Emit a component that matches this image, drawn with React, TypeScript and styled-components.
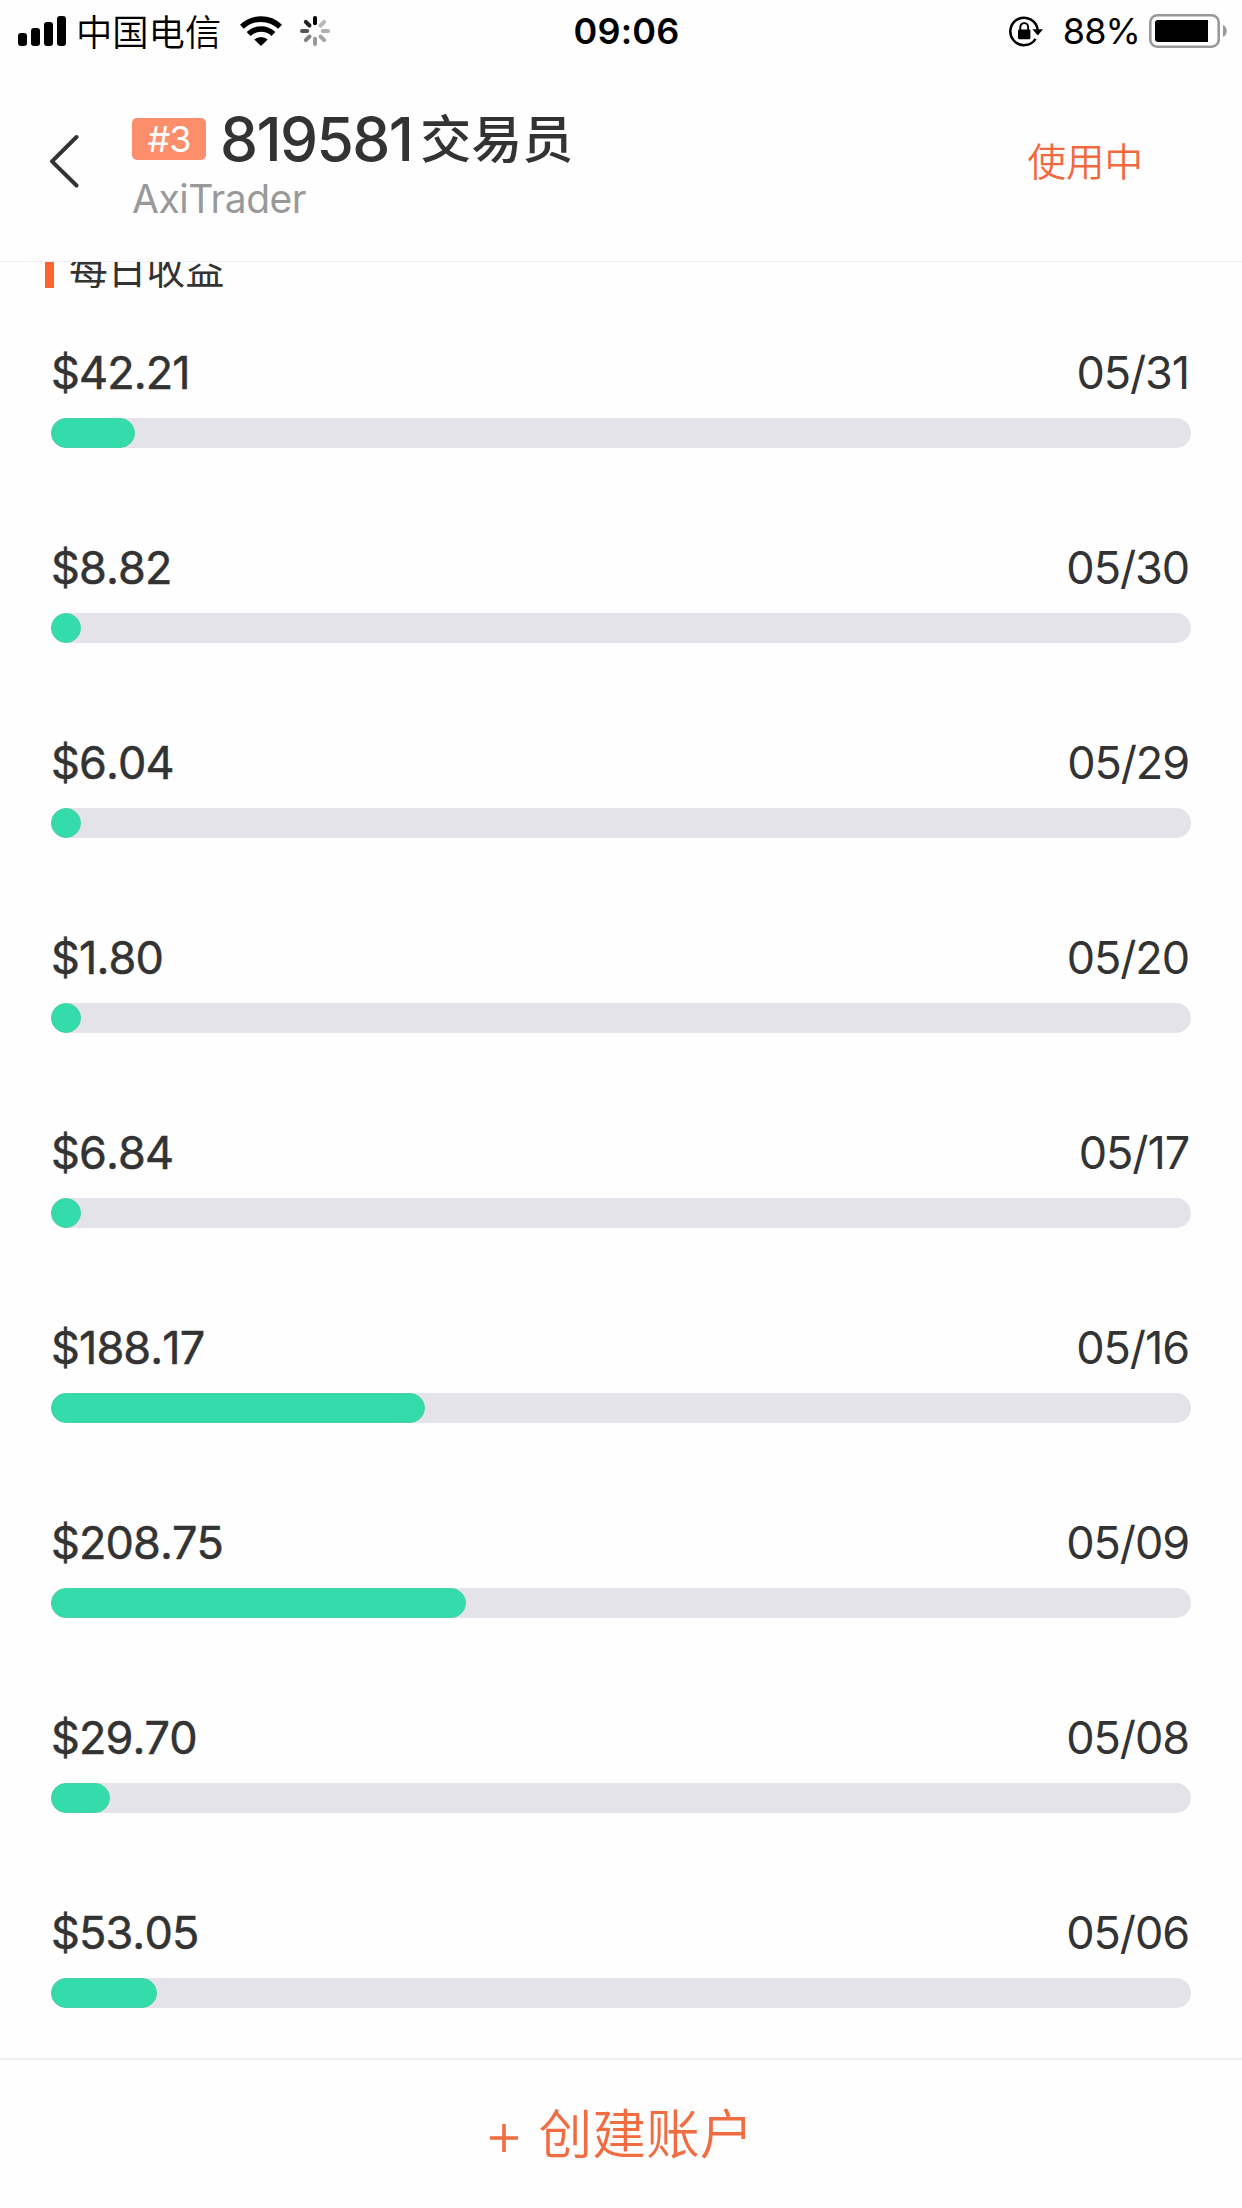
import React from "react";
import styled, { createGlobalStyle } from "styled-components";

const LATIN = `Inter, "Liberation Sans", sans-serif`;
const CJK = `"Noto Sans CJK SC", "Noto Sans", sans-serif`;

const GlobalStyle = createGlobalStyle`
  * { box-sizing: border-box; }
  body { margin: 0; background: #fefefe; }
`;

const Screen = styled.div`
  width: 1242px;
  height: 2208px;
  display: flex;
  flex-direction: column;
  overflow: hidden;
  background: #fefefe;
  color: #333;
  font-family: ${LATIN};
`;

const StatusBar = styled.div`
  height: 60px;
  flex: none;
  display: grid;
  grid-template-columns: 1fr auto 1fr;
  align-items: center;
  padding: 0 14px 0 18px;
  color: #000;
  svg { display: block; flex: none; }
`;

const StatusLeft = styled.div`
  display: flex;
  align-items: center;
`;

const StatusRight = styled.div`
  display: flex;
  align-items: center;
  justify-content: flex-end;
`;

const Carrier = styled.span`
  font: 350 36.3px/56px ${CJK};
  margin: 0 19px 3px 10px;
  width: 145px;
  white-space: nowrap;
`;

const Spinner = styled.div`
  margin-left: 18px;
`;

const Clock = styled.span`
  font-size: 36px;
  font-weight: 600;
  line-height: 62px;
  letter-spacing: 0.2px;
  padding: 0 0 0 7px;
`;

const Percent = styled.span`
  font-size: 36px;
  line-height: 62px;
  margin: 0 9px 0 20px;
  letter-spacing: -0.9px;
`;

const Header = styled.header`
  height: 202px;
  flex: none;
  display: flex;
  align-items: center;
  border-bottom: 1px solid #eee;
  padding: 0 99px 0 48px;
`;

const BackButton = styled.div`
  width: 84px;
  flex: none;
  svg { display: block; }
`;

const Identity = styled.div`
  flex: 1;
  display: flex;
  flex-direction: column;
  padding-top: 8px;
`;

const TitleLine = styled.div`
  display: flex;
  align-items: center;
  height: 68px;
`;

const Rank = styled.span`
  width: 74px;
  height: 42px;
  border-radius: 5px;
  background: #fc8e6c;
  color: #fff;
  font-size: 36px;
  line-height: 42px;
  text-align: center;
  letter-spacing: -1px;
  margin-right: 14px;
`;

const AccountNumber = styled.span`
  font-size: 60.5px;
  font-weight: 500;
  line-height: 68px;
  letter-spacing: -1.6px;
`;

const AccountKind = styled.span`
  font: 500 51px/62px ${CJK};
  margin: 0 0 5px 8px;
`;

const Broker = styled.div`
  font-size: 39px;
  line-height: 52px;
  color: #999;
  letter-spacing: -0.5px;
`;

const InUse = styled.div`
  font: 350 38.5px/60px ${CJK};
  color: #f0693f;
  padding-bottom: 4px;
`;

const Scroll = styled.main`
  flex: 1;
  min-height: 0;
  overflow: hidden;
`;

const SectionTitle = styled.div`
  display: flex;
  align-items: center;
  height: 42px;
  margin-top: -16px;
  padding-left: 45px;
  font: 400 38.8px/40px ${CJK};
`;

const Accent = styled.i`
  width: 9px;
  height: 42px;
  margin-right: 15px;
  background: #fd6530;
`;

const List = styled.div`
  padding: 55px 51px 0;
`;

const Day = styled.div`
  height: 195px;
`;

const DayLine = styled.div`
  display: flex;
  justify-content: space-between;
  height: 75px;
  padding-right: 2px;
  font-size: 45px;
  line-height: 60px;
  font-kerning: none;
`;

const Amount = styled.span`
  font-weight: 400;
  -webkit-text-stroke: 0.5px currentColor;
  letter-spacing: -0.9px;
`;

const DateText = styled.span`
  letter-spacing: -1.1px;
`;

const Track = styled.div`
  height: 30px;
  border-radius: 15px;
  background: #e3e3e9;
`;

const Fill = styled.div`
  height: 30px;
  min-width: 30px;
  border-radius: 15px;
  background: #34dbab;
  border: 1px solid #48d2a8;
`;

const CreateBar = styled.footer`
  height: 150px;
  flex: none;
  display: flex;
  align-items: center;
  justify-content: center;
  gap: 20px;
  border-top: 2px solid #eee;
  padding-left: 2px;
  color: #f26c42;
  svg { margin-top: 7px; }
`;

const CreateLabel = styled.span`
  font: 350 53.8px/80px ${CJK};
  padding-bottom: 6px;
`;

const FULL_SCALE = 573;

const days: [string, string][] = [
  ["42.21", "05/31"],
  ["8.82", "05/30"],
  ["6.04", "05/29"],
  ["1.80", "05/20"],
  ["6.84", "05/17"],
  ["188.17", "05/16"],
  ["208.75", "05/09"],
  ["29.70", "05/08"],
  ["53.05", "05/06"],
];

const SignalIcon = () => (
  <svg width="48" height="30" viewBox="0 0 48 30">
    <rect x="0" y="17" width="9" height="13" rx="3" />
    <rect x="13" y="12" width="9" height="18" rx="3" />
    <rect x="26" y="6" width="9" height="24" rx="3" />
    <rect x="39" y="0" width="9" height="30" rx="3" />
  </svg>
);

const WifiIcon = () => (
  <svg width="42" height="30" viewBox="0 0 42 30">
    <g fill="none" stroke="#000" strokeWidth="5.6">
      <path d="M1.9 10.8A27.5 27.5 0 0 1 40.1 10.8" />
      <path d="M8.6 18A18 18 0 0 1 33.4 18" />
    </g>
    <path d="M14.3 23.6a9.6 9.6 0 0 1 13.4 0L21 30z" />
  </svg>
);

const spokes = ["#000", "#b8b8b8", "#b0b0b0", "#a6a6a6", "#999", "#808080", "#555", "#222"];

const SpinnerIcon = () => (
  <svg width="30" height="30" viewBox="-15 -15 30 30">
    {spokes.map((color, i) => (
      <path
        key={i}
        d="M0 -7.8V-13"
        stroke={color}
        strokeWidth="4"
        strokeLinecap="round"
        transform={`rotate(${i * 45})`}
      />
    ))}
  </svg>
);

const LockRotationIcon = () => (
  <svg width="34" height="31" viewBox="0 0 34 31">
    <path d="M26.6 22.8A13.7 13.7 0 1 1 28.6 13.5" fill="none" stroke="#000" strokeWidth="2.5" />
    <path d="M23.4 13.2H34L28.8 19.6z" />
    <rect x="9" y="13.6" width="12.4" height="9.6" rx="1.2" />
    <path d="M11.3 14.5V11a3.9 3.9 0 0 1 7.8 0V14.5" fill="none" stroke="#000" strokeWidth="1.9" />
  </svg>
);

const BatteryIcon = () => (
  <svg width="79" height="34" viewBox="0 0 79 34">
    <rect x="1.3" y="1.3" width="68.4" height="31.4" rx="7" fill="none" stroke="#999" strokeWidth="2.6" />
    <path d="M6 9a3 3 0 0 1 3-3H59V28H9a3 3 0 0 1-3-3z" />
    <path d="M74 11C79 13 79 21 74 23z" fill="#999" />
  </svg>
);

const BackIcon = () => (
  <svg width="32" height="54" viewBox="0 0 32 54" fill="none" stroke="#333" strokeWidth="4" strokeLinecap="round" strokeLinejoin="round">
    <path d="M28.5 3L4 27.3L28.5 51.5" />
  </svg>
);

const PlusIcon = () => (
  <svg width="28" height="28" viewBox="0 0 28 28" stroke="#f26c42" strokeWidth="3.6">
    <path d="M14 0V28M0 14H28" />
  </svg>
);

export default function App() {
  return (
    <Screen>
      <GlobalStyle />
      <StatusBar>
        <StatusLeft>
          <SignalIcon />
          <Carrier>中国电信</Carrier>
          <WifiIcon />
          <Spinner>
            <SpinnerIcon />
          </Spinner>
        </StatusLeft>
        <Clock>09:06</Clock>
        <StatusRight>
          <LockRotationIcon />
          <Percent>88%</Percent>
          <BatteryIcon />
        </StatusRight>
      </StatusBar>
      <Header>
        <BackButton>
          <BackIcon />
        </BackButton>
        <Identity>
          <TitleLine>
            <Rank>#3</Rank>
            <AccountNumber>819581</AccountNumber>
            <AccountKind>交易员</AccountKind>
          </TitleLine>
          <Broker>AxiTrader</Broker>
        </Identity>
        <InUse>使用中</InUse>
      </Header>
      <Scroll>
        <SectionTitle>
          <Accent />
          每日收益
        </SectionTitle>
        <List>
          {days.map(([amount, date]) => (
            <Day key={date}>
              <DayLine>
                <Amount>${amount}</Amount>
                <DateText>{date}</DateText>
              </DayLine>
              <Track>
                <Fill style={{ width: `${(Number(amount) / FULL_SCALE) * 100}%` }} />
              </Track>
            </Day>
          ))}
        </List>
      </Scroll>
      <CreateBar>
        <PlusIcon />
        <CreateLabel>创建账户</CreateLabel>
      </CreateBar>
    </Screen>
  );
}
